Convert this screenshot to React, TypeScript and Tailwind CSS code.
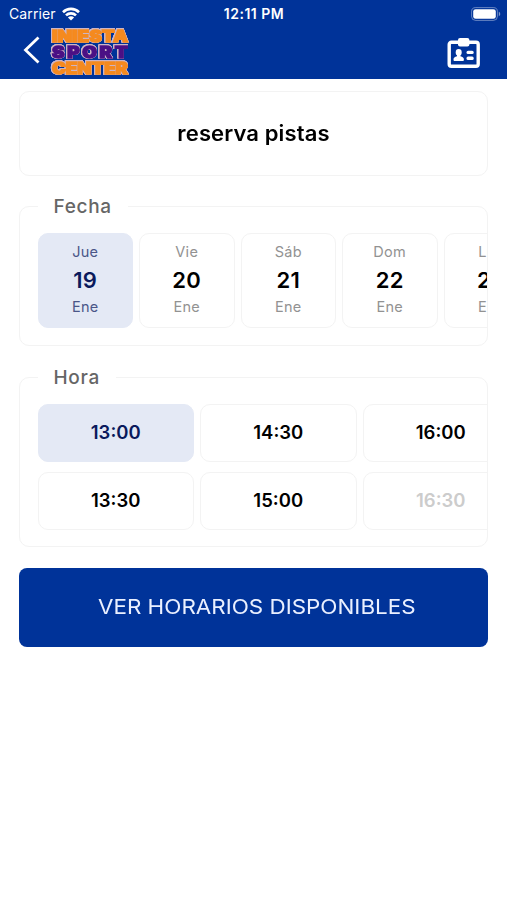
import React from 'react'

interface Day {
  weekday: string
  day: number
  month: string
}

interface Slot {
  time: string
  disabled?: boolean
}

const DAYS: Day[] = [
  { weekday: 'Jue', day: 19, month: 'Ene' },
  { weekday: 'Vie', day: 20, month: 'Ene' },
  { weekday: 'Sáb', day: 21, month: 'Ene' },
  { weekday: 'Dom', day: 22, month: 'Ene' },
  { weekday: 'Lun', day: 23, month: 'Ene' },
]

const SLOTS: Slot[] = [
  { time: '13:00' },
  { time: '14:30' },
  { time: '16:00' },
  { time: '13:30' },
  { time: '15:00' },
  { time: '16:30', disabled: true },
]

function WifiIcon() {
  return (
    <svg width="18" height="14" viewBox="0 0 18 14" fill="none" stroke="white" strokeWidth="2.6">
      <path d="M1 5.2a11.4 11.4 0 0 1 16 0" />
      <path d="M4 8.4a7.1 7.1 0 0 1 10 0" />
      <path d="M9 13.6 5.9 10.5a4.4 4.4 0 0 1 6.2 0Z" fill="white" stroke="none" />
    </svg>
  )
}

function BatteryIcon() {
  return (
    <svg width="31" height="14" viewBox="0 0 31 14">
      <rect x="0.6" y="0.6" width="25.8" height="12.8" rx="4" fill="none" stroke="white" strokeOpacity="0.4" />
      <rect x="2.2" y="2.2" width="22.6" height="9.6" rx="2.4" fill="white" />
      <path d="M27.8 4.8c1.9.7 1.9 3.7 0 4.4Z" fill="white" fillOpacity="0.5" />
    </svg>
  )
}

function Logo() {
  return (
    <svg
      width="80"
      height="49"
      viewBox="0 0 80 49"
      className="overflow-visible font-['Inter',sans-serif] font-black [filter:drop-shadow(0.5px_0_0_#cdb4c4)_drop-shadow(-0.5px_0_0_#cdb4c4)_drop-shadow(0_0.5px_0_#cdb4c4)_drop-shadow(0_-0.5px_0_#cdb4c4)]"
      fontSize="15.5"
      strokeWidth="1.3"
      strokeLinejoin="miter"
    >
      <text x="2" y="14" textLength="76" lengthAdjust="spacingAndGlyphs" fill="#f58a1f" stroke="#f58a1f">
        INIESTA
      </text>
      <g transform="scale(1.22 1)">
        <text x="1.7" y="30" textLength="62" fill="#4b1085" stroke="#4b1085">
          SPORT
        </text>
      </g>
      <text x="2" y="46" textLength="76" lengthAdjust="spacingAndGlyphs" fill="#f58a1f" stroke="#f58a1f">
        CENTER
      </text>
    </svg>
  )
}

function BadgeIcon() {
  return (
    <svg width="34" height="32" viewBox="0 0 34 32" fill="white">
      <rect x="2.2" y="5.2" width="29" height="24" rx="2.2" fill="none" stroke="white" strokeWidth="3.4" />
      <rect x="11" y="1" width="11.4" height="8.6" rx="2" />
      <ellipse cx="11.7" cy="15.4" rx="3" ry="3.3" />
      <path d="M10 17h3.4v2.2c2.3.5 3.5 1.6 3.5 3.2 0 1-.4 1.5-1.3 1.5H7.8c-.9 0-1.3-.5-1.3-1.5 0-1.6 1.2-2.7 3.5-3.2Z" />
      <rect x="19.5" y="13.7" width="7.2" height="3.4" rx="1.6" />
      <rect x="19.5" y="19.6" width="7.2" height="3.4" rx="1.6" />
    </svg>
  )
}

function Header() {
  return (
    <header className="h-[79px] bg-[#003399] text-white">
      {/* Status bar */}
      <div className="grid h-[27px] grid-cols-3 items-center pl-[9px] pr-[5px]">
        <div className="flex items-center gap-1.5">
          <span className="text-[14px] tracking-[0.1px]">Carrier</span>
          <WifiIcon />
        </div>
        <span className="-ml-[3px] text-center text-[14px] font-semibold tracking-[0.5px] whitespace-nowrap">
          12:11 PM
        </span>
        <div className="flex justify-end">
          <BatteryIcon />
        </div>
      </div>
      {/* Navigation */}
      <div className="flex h-[50px] items-center pl-[23px] pr-[26px]">
        <svg width="18" height="28" viewBox="0 0 18 28" fill="none" stroke="white" strokeWidth="2.8" className="-mt-1">
          <path d="M15.5 1.5 2.5 14l13 12.5" />
        </svg>
        <div className="ml-[9px]">
          <Logo />
        </div>
        <div className="ml-auto pt-px">
          <BadgeIcon />
        </div>
      </div>
    </header>
  )
}

interface FieldGroupProps {
  label: string
  className: string
  children: React.ReactNode
}

function FieldGroup({ label, className, children }: FieldGroupProps) {
  return (
    <section className={`rounded-[10px] border border-[#f3f3f3] ${className}`}>
      <h2 className="-mt-3 ml-[18px] h-6 w-fit bg-white pr-4 pl-[15.5px] text-[19px] leading-6 font-medium tracking-[0.7px] text-[#666]">
        {label}
      </h2>
      <div className="overflow-hidden pl-[18px]">{children}</div>
    </section>
  )
}

function DayCard({ day, selected }: { day: Day; selected: boolean }) {
  return (
    <div
      className={`flex h-[95px] w-[95.5px] shrink-0 flex-col items-center rounded-[10px] border pt-[7px] ${
        selected ? 'border-[#e4e9f5] bg-[#e4e9f5] text-[#4a5688]' : 'border-[#f3f3f3] text-[#929292]'
      }`}
    >
      <span className="text-[14.5px] leading-[22px] tracking-[0.3px]">{day.weekday}</span>
      <span
        className={`text-[22px] leading-[35px] font-semibold tracking-[0.3px] ${
          selected ? 'text-[#0a1a5c]' : 'text-black'
        }`}
      >
        {day.day}
      </span>
      <span className="text-[14.5px] leading-[18px] tracking-[0.3px]">{day.month}</span>
    </div>
  )
}

function SlotCard({ slot, selected }: { slot: Slot; selected: boolean }) {
  let color = 'border-[#f3f3f3] text-black'
  if (selected) color = 'border-[#e4e9f5] bg-[#e4e9f5] text-[#0a1a5c]'
  if (slot.disabled) color = 'border-[#f3f3f3] text-[#cccccc]'

  return (
    <div
      className={`flex h-[58px] items-center justify-center rounded-[10px] border pb-px text-[18.5px] font-semibold ${color}`}
    >
      {slot.time}
    </div>
  )
}

export default function App() {
  return (
    <div className="min-h-[900px] w-[507px] bg-white font-['Inter','Liberation_Sans',sans-serif]">
      <Header />
      <main className="px-[19px] pt-3">
        <div className="flex h-[85px] items-center justify-center rounded-[10px] border border-[#f3f3f3]">
          <h1 className="scale-x-105 text-[21px] font-semibold tracking-[0.1px] text-black">reserva pistas</h1>
        </div>

        <FieldGroup label="Fecha" className="mt-[30px] h-[140px]">
          <div className="-ml-[0.5px] mt-[14px] flex gap-1.5">
            {DAYS.map((day, i) => (
              <DayCard key={day.day} day={day} selected={i === 0} />
            ))}
          </div>
        </FieldGroup>

        <FieldGroup label="Hora" className="mt-[31px] h-[170px]">
          <div className="-ml-[0.5px] mt-[14px] grid w-max grid-cols-[156.5px_156.5px_156.5px] gap-x-1.5 gap-y-[10px]">
            {SLOTS.map((slot, i) => (
              <SlotCard key={slot.time} slot={slot} selected={i === 0} />
            ))}
          </div>
        </FieldGroup>

        <button className="mt-[21px] flex h-[79px] w-full items-center justify-center rounded-lg bg-[#003399] pb-px pl-1.5 text-[20px] text-[#eaf0ff]">
          <span className="scale-x-112">VER HORARIOS DISPONIBLES</span>
        </button>
      </main>
    </div>
  )
}
